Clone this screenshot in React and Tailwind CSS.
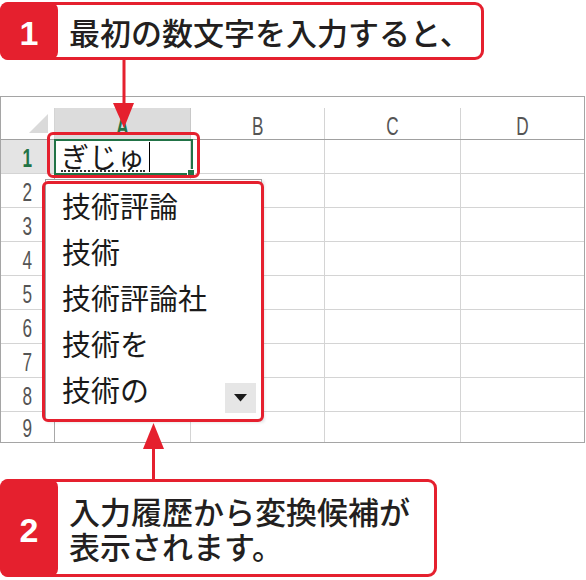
const rows = [1, 2, 3, 4, 5, 6, 7, 8, 9];
const candidates = ["技術評論", "技術", "技術評論社", "技術を", "技術の"];

function Label({ children, green }) {
  return (
    <span
      className={`inline-block scale-x-[0.66] text-[26px] leading-none font-['Liberation_Sans',sans-serif] ${
        green ? "font-bold text-[#217346]" : "text-[#555555]"
      }`}
    >
      {children}
    </span>
  );
}

function Callout({ num, className, children }) {
  return (
    <div className={`flex rounded-[9px] border-[3px] border-[#e5202e] bg-white ${className}`}>
      <div className="-my-[3px] -ml-[3px] flex w-[58px] shrink-0 items-center justify-center rounded-[8px] bg-[#e5202e] pt-[4px] font-['Liberation_Sans',sans-serif] text-[34px] font-bold text-white">
        {num}
      </div>
      <div className="flex flex-1 flex-col justify-center pl-[11px] text-[31px] font-medium leading-[35px] text-[#231f20]">
        {children}
      </div>
    </div>
  );
}

export default function App() {
  return (
    <div className="relative h-[580px] w-[586px] overflow-hidden bg-white font-['Noto_Sans_CJK_JP',sans-serif]">
      <Callout num="1" className="mt-[2px] h-[58px] w-[484px]">
        <p>最初の数文字を入力すると、</p>
      </Callout>

      {/* sheet */}
      <div className="mt-[36px] w-[585px] border border-[#a5a5a5] bg-white">
        <div className="h-[11px]" />
        <div className="flex h-[32px] border-b border-[#a0a0a0]">
          <div className="relative w-[54px] shrink-0 border-r border-[#d4d4d4]">
            <svg className="absolute left-[28px] top-[6px]" width="20" height="20" viewBox="0 0 20 20">
              <polygon points="19,0 19,19 0,19" fill="#dadada" />
            </svg>
          </div>
          <div className="flex w-[136px] shrink-0 items-center justify-center border-r border-[#c8c8c8] bg-[#dcdcdc] pt-[4px]">
            <Label green>A</Label>
          </div>
          <div className="flex w-[134px] shrink-0 items-center justify-center border-r border-[#d4d4d4] pt-[4px]">
            <Label>B</Label>
          </div>
          <div className="flex w-[136px] shrink-0 items-center justify-center border-r border-[#d4d4d4] pt-[4px]">
            <Label>C</Label>
          </div>
          <div className="flex flex-1 items-center justify-center pt-[4px]">
            <Label>D</Label>
          </div>
        </div>

        {rows.map((n) => (
          <div key={n} className={`flex ${n === 9 ? "h-[30px]" : "h-[34px] border-b border-[#d4d4d4]"}`}>
            <div
              className={`flex w-[54px] shrink-0 items-center justify-center border-r border-[#a8a8a8] pt-[2px] ${
                n === 1 ? "bg-[#e4e4e4]" : ""
              }`}
            >
              <Label green={n === 1}>{n}</Label>
            </div>
            <div className="flex w-[136px] shrink-0 items-center border-r border-[#d4d4d4] pl-[6px]">
              {n === 1 ? (
                <>
                  <span className="border-b-2 border-dotted border-[#333333] text-[28px] leading-[28px] text-[#1a1a1a]">
                    ぎじゅ
                  </span>
                  <span className="ml-[4px] inline-block h-[30px] w-px bg-black" />
                </>
              ) : null}
            </div>
            <div className="w-[134px] shrink-0 border-r border-[#d4d4d4]" />
            <div className="w-[136px] shrink-0 border-r border-[#d4d4d4]" />
            <div className="flex-1" />
          </div>
        ))}
      </div>

      <Callout num="2" className="mt-[36px] h-[98px] w-[437px]">
        <p>入力履歴から変換候補が</p>
        <p>表示されます。</p>
      </Callout>

      {/* active cell */}
      <div className="absolute left-[54px] top-[139px] h-[36px] w-[139px] border-2 border-[#217346]" />
      <div className="absolute left-[187px] top-[169px] h-[8px] w-[8px] border border-white bg-[#217346]" />

      {/* autocomplete list */}
      <div className="absolute left-[45px] top-[179px] h-[241px] w-[217px] border border-[#a0a0a0] bg-white pt-[2px] shadow-[2px_2px_3px_rgba(0,0,0,0.15)]">
        {candidates.map((c) => (
          <div key={c} className="h-[46px] pl-[16px] text-[29px] leading-[46px] text-[#1a1a1a]">
            {c}
          </div>
        ))}
        <div className="absolute left-[179px] top-[203px] flex h-[30px] w-[31px] items-center justify-center bg-[#e6e6e6]">
          <svg width="13" height="8" viewBox="0 0 13 8">
            <polygon points="0,0 13,0 6.5,7.5" fill="#1a1a1a" />
          </svg>
        </div>
      </div>

      {/* red highlights */}
      <div className="absolute left-[47px] top-[132px] h-[46px] w-[153px] rounded-[6px] border-[3px] border-[#e5202e]" />
      <div className="absolute left-[42px] top-[181px] h-[241px] w-[222px] rounded-[6px] border-[3px] border-[#e5202e]" />

      {/* arrows */}
      <svg className="absolute left-[113px] top-[59px]" width="22" height="70" viewBox="0 0 22 70">
        <rect x="9.5" y="0" width="3" height="46" fill="#e5202e" />
        <polygon points="0,44 21,44 11,69" fill="#e5202e" />
      </svg>
      <svg className="absolute left-[143px] top-[422px]" width="21" height="58" viewBox="0 0 21 58">
        <polygon points="10.5,1 0,27 21,27" fill="#e5202e" />
        <rect x="9" y="26" width="3" height="32" fill="#e5202e" />
      </svg>
    </div>
  );
}
